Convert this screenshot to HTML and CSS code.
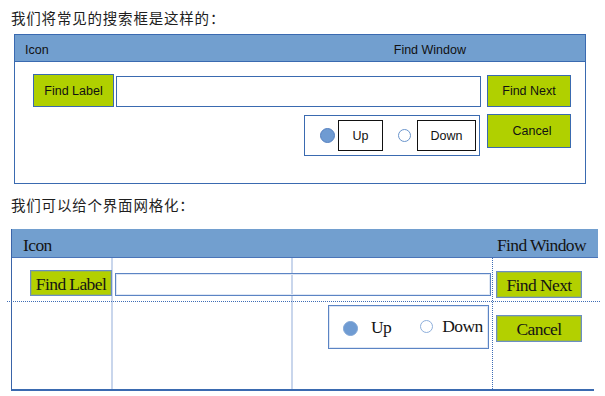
FILE: index.html
```html
<!DOCTYPE html>
<html>
<head>
<meta charset="utf-8">
<link rel="stylesheet" href="styles.css">
</head>
<body>
<p class="caption first">我们将常见的搜索框是这样的：</p>
<div class="win1">
  <div class="head1">
    <span class="h1-icon">Icon</span>
    <span class="h1-title">Find Window</span>
  </div>
  <div class="body1">
    <div class="row1">
      <div class="btn1 label1">Find Label</div>
      <div class="input1"></div>
      <div class="btn1 next1">Find Next</div>
    </div>
    <div class="row2">
      <div class="radio1">
        <span class="dot1 on"></span>
        <span class="rlabel1 up1">Up</span>
        <span class="dot1 off"></span>
        <span class="rlabel1 down1">Down</span>
      </div>
      <div class="btn1 cancel1">Cancel</div>
    </div>
  </div>
</div>
<p class="caption second">我们可以给个界面网格化：</p>
<div class="win2">
  <div class="head2">
    <span>Icon</span>
    <span>Find Window</span>
  </div>
  <div class="grid2">
    <div class="vline light c2"></div>
    <div class="vline light c3"></div>
    <div class="vline dotted c4"></div>
    <div class="hline"></div>
    <div class="btn2 label2">Find Label</div>
    <div class="input2"></div>
    <div class="btn2 next2">Find Next</div>
    <div class="radio2">
      <span class="dot2 on"></span>
      <span class="up2">Up</span>
      <span class="dot2 off"></span>
      <span class="down2">Down</span>
    </div>
    <div class="btn2 cancel2">Cancel</div>
  </div>
</div>
</body>
</html>
```
FILE: styles.css
```css
html, body {
  margin: 0;
  padding: 0;
  background: #ffffff;
}
body {
  width: 605px;
  height: 396px;
  overflow: hidden;
}
.caption {
  margin: 0;
  padding-left: 11px;
  font-family: "Noto Sans CJK SC", sans-serif;
  font-size: 14.5px;
  line-height: 20px;
  color: #1e1e1e;
  letter-spacing: 0.8px;
}
.caption.first {
  padding-top: 8px;
}
.caption.second {
  margin-top: 11px;
}

/* ---------- first window ---------- */
.win1 {
  margin-top: 6px;
  margin-left: 14px;
  width: 572px;
  height: 150px;
  box-sizing: border-box;
  border: 1px solid #3a6ab0;
  font-family: "Liberation Sans", Arial, sans-serif;
  font-size: 12.5px;
  color: #111;
}
.head1 {
  background: #729fcf;
  border-bottom: 1px solid #3a6ab0;
  display: flex;
  align-items: center;
  padding-top: 3px;
  box-sizing: border-box;
  height: 27px;
}
.h1-icon {
  padding-left: 10px;
}
.h1-title {
  margin-left: auto;
  margin-right: 119px;
}
.body1 {
  padding: 12px 0 0 18px;
}
.row1 {
  display: flex;
  align-items: flex-start;
}
.btn1 {
  box-sizing: border-box;
  background: #b0d000;
  border: 1px solid #3a6ab0;
  display: flex;
  align-items: center;
  justify-content: center;
}
.label1 {
  width: 81px;
  height: 33px;
}
.input1 {
  box-sizing: border-box;
  margin-left: 2px;
  margin-top: 2px;
  width: 365px;
  height: 31px;
  border: 1px solid #3a6ab0;
  background: #fff;
}
.next1 {
  margin-left: 6px;
  margin-top: 1px;
  width: 84px;
  height: 32px;
}
.row2 {
  display: flex;
  align-items: flex-start;
  margin-top: 7px;
  padding-left: 271px;
}
.radio1 {
  box-sizing: border-box;
  margin-top: 1px;
  width: 176px;
  height: 41px;
  border: 1px solid #3a6ab0;
  display: flex;
  align-items: center;
  padding-left: 15px;
}
.dot1 {
  box-sizing: border-box;
  border-radius: 50%;
  flex: none;
}
.dot1.on {
  width: 15px;
  height: 15px;
  background: #6f9bd2;
  border: 1px solid #5580c0;
}
.dot1.off {
  width: 13px;
  height: 13px;
  margin-left: 15px;
  background: #fff;
  border: 1px solid #6a95cc;
}
.rlabel1 {
  box-sizing: border-box;
  height: 31px;
  border: 1px solid #111;
  display: flex;
  align-items: center;
  justify-content: center;
}
.up1 {
  width: 45px;
  margin-left: 3px;
}
.down1 {
  width: 59px;
  margin-left: 6px;
}
.cancel1 {
  margin-left: 7px;
  width: 84px;
  height: 34px;
  padding-left: 6px;
}

/* ---------- second window ---------- */
.win2 {
  margin-top: 14px;
  margin-left: 11px;
  width: 586px;
  border-left: 1px solid #3a64a8;
  font-family: "Liberation Serif", "Times New Roman", serif;
  font-size: 17.5px;
  color: #141414;
}
.head2 {
  background: #729fcf;
  border-bottom: 1px solid #4a74b8;
  display: flex;
  justify-content: space-between;
  align-items: flex-end;
  padding: 0 12px 2px 11px;
  box-sizing: content-box;
  height: 26px;
  line-height: 20px;
  letter-spacing: -0.6px;
}
.grid2 {
  display: grid;
  grid-template-columns: 99px 180px 201px 105px;
  grid-template-rows: 43px 88px;
  border-bottom: 2px solid #3a6ab0;
  width: 582px;
}
.vline {
  grid-row: 1 / 3;
  align-self: stretch;
}
.vline.light {
  border-left: 2px solid #c9d6ec;
}
.vline.dotted {
  border-left: 1px dotted #3f6db5;
}
.c2 { grid-column: 2; }
.c3 { grid-column: 3; }
.c4 { grid-column: 4; }
.hline {
  grid-row: 2;
  grid-column: 1 / -1;
  margin-left: -5px;
  margin-right: -3px;
  height: 0;
  border-top: 1px dotted #3f6db5;
}
.btn2 {
  box-sizing: border-box;
  background: #b3d000;
  border: 1px solid #6b8fc4;
  box-shadow: inset 0 0 0 1px #9fbc3a;
  display: flex;
  align-items: center;
  justify-content: center;
  letter-spacing: -0.6px;
  padding-top: 1px;
  line-height: 20px;
}
.label2 {
  grid-column: 1;
  grid-row: 1;
  align-self: start;
  margin-left: 18px;
  margin-top: 12px;
  width: 82px;
  height: 26px;
}
.input2 {
  grid-column: 2 / 4;
  grid-row: 1;
  align-self: start;
  box-sizing: border-box;
  margin-left: 4px;
  margin-top: 15px;
  width: 376px;
  height: 23px;
  border: 1px solid #5b84c4;
  box-shadow: inset 0 0 0 1px #dfe7f4;
}
.next2 {
  grid-column: 4;
  grid-row: 1;
  align-self: start;
  margin-left: 4px;
  margin-top: 13px;
  width: 86px;
  height: 27px;
}
.radio2 {
  grid-column: 3;
  grid-row: 2;
  align-self: start;
  box-sizing: border-box;
  margin-left: 37px;
  margin-top: 4px;
  width: 161px;
  height: 44px;
  border: 1px solid #5b84c4;
  box-shadow: inset 0 0 0 1px #dfe7f4;
  display: flex;
  align-items: center;
  padding-left: 14px;
  letter-spacing: -0.6px;
  line-height: 20px;
}
.dot2 {
  box-sizing: border-box;
  border-radius: 50%;
  flex: none;
}
.dot2.on {
  width: 15px;
  height: 15px;
  margin-top: 3px;
  background: #6f9bd2;
  border: 1px solid #7fa5d6;
}
.dot2.off {
  width: 13px;
  height: 13px;
  margin-left: 29px;
  margin-top: -2px;
  background: #fff;
  border: 1px solid #8eafdb;
}
.up2 {
  margin-left: 13px;
}
.down2 {
  margin-left: 9px;
  margin-top: -3px;
}
.cancel2 {
  grid-column: 4;
  grid-row: 2;
  align-self: start;
  margin-left: 4px;
  margin-top: 14px;
  width: 86px;
  height: 27px;
}
```
